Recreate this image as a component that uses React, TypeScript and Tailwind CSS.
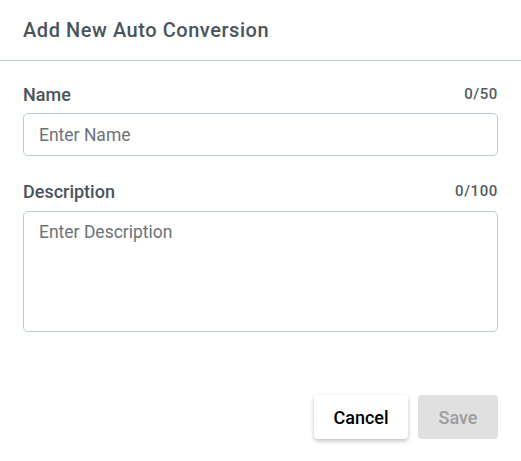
export default function App() {
  return (
    <div
      className="w-[521px] h-[461px] bg-white flex flex-col"
      style={{ fontFamily: "Roboto, 'Liberation Sans', sans-serif" }}
    >
      {/* Header */}
      <div className="h-[61px] flex items-center px-[23px] border-b border-[#aecbd6] shrink-0">
        <h2 className="text-[20px] font-medium text-[#4a545b] tracking-[0.55px]">Add New Auto Conversion</h2>
      </div>

      {/* Body */}
      <div className="flex flex-col px-[23px] pt-[23px]">
        <div className="flex items-center justify-between h-[20px]">
          <label className="text-[18px] font-medium text-[#4a545b]">Name</label>
          <span className="text-[15px] font-medium tracking-[0.6px] text-[#535c62]">0/50</span>
        </div>
        <input
          className="mt-[9px] h-[43px] w-full rounded-[5px] border border-[#b3cfd9] px-[15px] text-[17.5px] text-[#333] placeholder:text-[#6b7378] outline-none"
          placeholder="Enter Name"
        />

        <div className="flex items-center justify-between h-[20px] mt-[25px]">
          <label className="text-[18px] font-medium text-[#4a545b]">Description</label>
          <span className="text-[15px] font-medium tracking-[0.6px] text-[#535c62]">0/100</span>
        </div>
        <textarea
          className="mt-[10px] h-[121px] w-full resize-none rounded-[5px] border border-[#b3cfd9] px-[15px] py-[8px] text-[17.5px] leading-[24px] text-[#333] placeholder:text-[#6b7378] outline-none"
          placeholder="Enter Description"
        />
      </div>

      {/* Footer */}
      <div className="flex justify-end gap-[10px] px-[23px] mt-[63px]">
        <button className="h-[44px] w-[94px] rounded-[4px] bg-white text-[18px] font-medium text-black shadow-[0_2px_4px_rgba(0,0,0,0.25)]">
          Cancel
        </button>
        <button
          disabled
          className="h-[44px] w-[80px] rounded-[4px] bg-[#e0e0e0] text-[18px] font-medium text-[#9e9e9e]"
        >
          Save
        </button>
      </div>
    </div>
  );
}
